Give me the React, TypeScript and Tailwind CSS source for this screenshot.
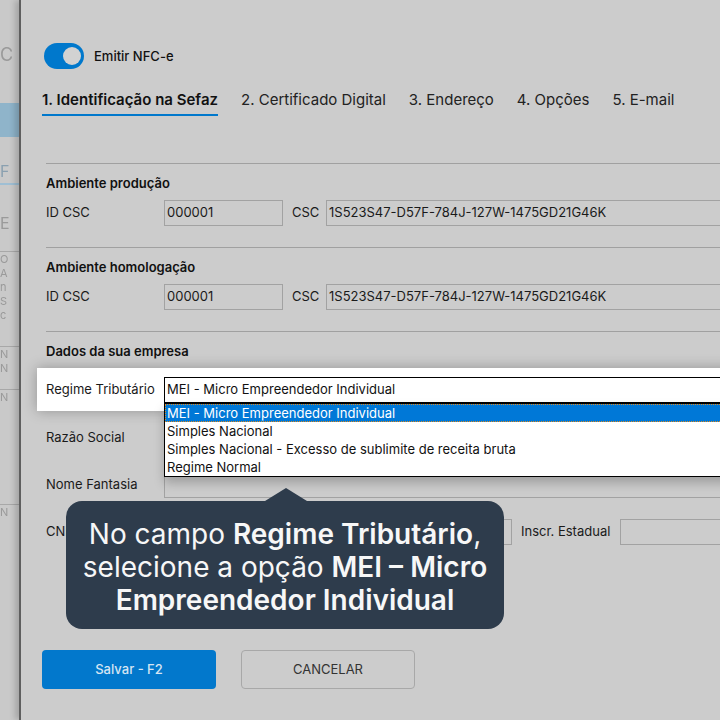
const tabs = ["1. Identificação na Sefaz", "2. Certificado Digital", "3. Endereço", "4. Opções", "5. E-mail"];

const regimes = [
	"MEI - Micro Empreendedor Individual",
	"Simples Nacional",
	"Simples Nacional - Excesso de sublimite de receita bruta",
	"Regime Normal",
];

function LeftStrip() {
	return (
		<div className="w-[19px] shrink-0 h-full overflow-hidden bg-[#c9c9c9] text-[#9a9a9a] blur-[0.5px] flex flex-col">
			<span className="mt-[44px] text-[18px] leading-[22px]">C</span>
			<div className="mt-[37px] h-[34px] bg-[#8fb4ca]" />
			<span className="mt-[24px] text-[16px] leading-[20px] text-[#8aa0b0]">F</span>
			<div className="mt-[2px] h-[2px] bg-[#9fbfd4]" />
			<span className="mt-[28px] text-[16px] leading-[20px]">E</span>
			<div className="mt-[18px] h-px bg-[#a8a8a8]" />
			<span className="text-[11px] leading-[14px]">O</span>
			<span className="text-[11px] leading-[14px]">A</span>
			<span className="text-[11px] leading-[14px]">n</span>
			<span className="text-[11px] leading-[14px]">S</span>
			<span className="text-[11px] leading-[14px]">c</span>
			<div className="mt-[24px] h-px bg-[#a8a8a8]" />
			<span className="text-[11px] leading-[14px]">N</span>
			<span className="text-[11px] leading-[14px]">N</span>
			<div className="mt-[14px] h-px bg-[#a8a8a8]" />
			<span className="text-[11px] leading-[14px]">N</span>
			<div className="mt-[100px] h-px bg-[#a8a8a8]" />
			<span className="text-[11px] leading-[14px]">N</span>
		</div>
	);
}

function Input({ value, className = "" }: { value?: string; className?: string }) {
	return (
		<div className={`h-[26px] border border-[#a2a2a2] flex items-center px-[2px] text-[13px] text-[#1a1a1a] ${className}`}>
			{value}
		</div>
	);
}

function CscSection({ title }: { title: string }) {
	return (
		<section className="border-t border-[#a0a0a0] pt-[10px] pb-[21px]">
			<h6 className="text-[13px] leading-[18px] font-semibold text-[#111]">{title}</h6>
			<div className="mt-[8px] flex items-center">
				<span className="w-[118px] text-[13px] text-[#1a1a1a]">ID CSC</span>
				<Input value="000001" className="w-[119px]" />
				<span className="ml-[9px] w-[34px] text-[13px] text-[#1a1a1a]">CSC</span>
				<Input value="1S523S47-D57F-784J-127W-1475GD21G46K" className="flex-1" />
			</div>
		</section>
	);
}

function FieldRow({ label }: { label: string }) {
	return (
		<div className="mt-[21px] flex items-center">
			<span className="w-[118px] text-[13px] text-[#1a1a1a]">{label}</span>
			<Input className="flex-1" />
		</div>
	);
}

export default function App() {
	return (
		<div className="w-[720px] h-[720px] overflow-hidden flex bg-[#cccccc] font-['Inter',sans-serif]">
			<LeftStrip />
			<div className="relative flex-1 min-w-0 h-full border-l-2 border-[#5e5e5e] shadow-[-4px_0_6px_rgba(0,0,0,0.18)]">
				<div className="w-[760px] pl-[21px] pt-[43px]">
					<div className="ml-[2px] flex items-center gap-[10px]">
						<div className="w-[40px] h-[26px] rounded-full bg-[#0078cc] flex items-center justify-end pr-[3px]">
							<div className="w-[18px] h-[18px] rounded-full bg-[#d2d2d2]" />
						</div>
						<span className="pt-px text-[13px] font-medium text-[#111]">Emitir NFC-e</span>
					</div>

					<nav className="mt-[21px] flex gap-[23px]">
						{tabs.map((tab, i) => (
							<span
								key={tab}
								className={`text-[15px] leading-[20px] pb-[4px] border-b-2 ${
									i === 0 ? "font-semibold text-[#111] border-[#0078cc]" : "text-[#222] border-transparent"
								}`}
							>
								{tab}
							</span>
						))}
					</nav>

					<main className="mt-[47px] pl-[4px]">
						<CscSection title="Ambiente produção" />
						<CscSection title="Ambiente homologação" />

						<section className="border-t border-[#a0a0a0] pt-[10px]">
							<h6 className="text-[13px] leading-[18px] font-semibold text-[#111]">Dados da sua empresa</h6>

							<div className="relative z-10 mt-[8px] -ml-[9px] pl-[9px] pt-[9px] pb-[8px] bg-white shadow-[0_0_14px_rgba(0,0,0,0.28)] flex items-center">
								<span className="w-[118px] text-[13px] text-[#1a1a1a]">Regime Tributário</span>
								<div className="relative flex-1">
									<div className="h-[26px] border border-black bg-white flex items-center px-[2px] text-[13px] text-[#111]">
										{regimes[0]}
									</div>
									<ul className="absolute left-0 right-0 top-[26px] border border-black bg-white shadow-[0_6px_10px_rgba(0,0,0,0.22)]">
										{regimes.map((r, i) => (
											<li
												key={r}
												className={`h-[18px] leading-[18px] px-[2px] text-[13px] ${
													i === 0 ? "bg-[#0078d7] text-white outline-1 outline-dotted outline-[#e08a1e] -outline-offset-1" : "text-[#111]"
												}`}
											>
												{r}
											</li>
										))}
									</ul>
								</div>
							</div>

							<div className="mt-[14px] flex items-center">
								<span className="w-[118px] text-[13px] text-[#1a1a1a]">Razão Social</span>
								<Input className="flex-1" />
							</div>
							<FieldRow label="Nome Fantasia" />
							<div className="mt-[21px] flex items-center">
								<span className="w-[118px] text-[13px] text-[#1a1a1a]">CNPJ</span>
								<Input className="w-[348px]" />
								<span className="ml-[9px] w-[99px] text-[13px] text-[#1a1a1a]">Inscr. Estadual</span>
								<Input className="flex-1" />
							</div>
						</section>
					</main>

					<footer className="mt-[105px] flex gap-[25px]">
						<button className="w-[174px] h-[39px] rounded-[4px] bg-[#0278cc] text-[13px] font-medium text-[#d6e5f3]">
							Salvar - F2
						</button>
						<button className="w-[174px] h-[39px] rounded-[4px] border border-[#a8a8a8] text-[13px] text-[#333]">
							CANCELAR
						</button>
					</footer>
				</div>

				<div className="absolute left-[45px] top-[501px] w-[438px] rounded-[16px] bg-[#2e3c4c] pt-[17px] pb-[12px] text-center text-[28px] leading-[33px] text-[#f7f7f7] z-20">
					<div className="absolute -top-[13px] left-[199px] w-0 h-0 border-l-[21px] border-r-[21px] border-b-[13px] border-l-transparent border-r-transparent border-b-[#2e3c4c]" />
					No campo <span className="font-semibold">Regime Tributário</span>,
					<br />
					selecione a opção <span className="font-semibold">MEI – Micro</span>
					<br />
					<span className="font-semibold">Empreendedor Individual</span>
				</div>
			</div>
		</div>
	);
}
